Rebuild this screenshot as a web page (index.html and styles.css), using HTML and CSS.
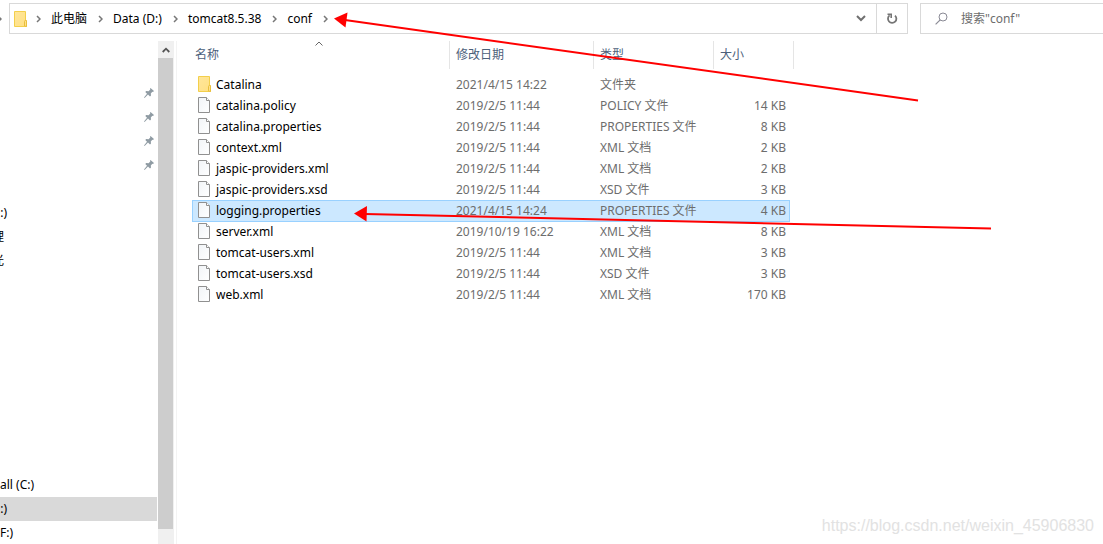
FILE: index.html
```
<!DOCTYPE html>
<html lang="zh-CN">
<head>
<meta charset="utf-8">
<title>conf</title>
<link rel="stylesheet" href="styles.css">
</head>
<body>
<svg class="defs" aria-hidden="true">
  <defs>
    <linearGradient id="paper" x1="0" y1="0" x2="1" y2="1"><stop offset="0" stop-color="#f1f4f7"/><stop offset="1" stop-color="#fff"/></linearGradient>
    <linearGradient id="gold" x1="0" y1="0" x2="1" y2="1"><stop offset="0" stop-color="#ffe69a"/><stop offset="1" stop-color="#ffe083"/></linearGradient>
  </defs>
  <symbol id="folder" viewBox="0 0 13 16"><path d="M.5.5h11v9.500h1v5.500H.5z" fill="url(#gold)" stroke="#f3cf4b"/><path d="M10.500 15V10.500q0-1 1-1h1V15.500z" fill="#ffe08a" stroke="#e9bf3c"/></symbol>
  <symbol id="file" viewBox="0 0 12 16"><path d="M.5.5h8l3 3v12H.5z" fill="url(#paper)" stroke="#909090"/><path d="M8.500.5v3h3" fill="#fff" stroke="#909090"/></symbol>
  <symbol id="chev" viewBox="0 0 5 8"><path d="M1 1l3 3-3 3" fill="none" stroke="#777" stroke-width="1.500"/></symbol>
  <symbol id="pin" viewBox="0 0 10 10"><path d="M6.500 0L10 3 9 4 8.300 3.800 6.800 5.600 7 7.600 6 8.500 4 6.600 .6 10 0 9.500 3 5.700 1.300 4 2.200 3 4.600 3.200 6.300 1.600 6 .7z" fill="#8f9ba3"/></symbol>
</svg>

<header class="toolbar">
  <svg class="chev chev-edge"><use href="#chev"/></svg>
  <nav class="address" aria-label="路径">
    <svg class="folder"><use href="#folder"/></svg>
    <svg class="chev"><use href="#chev"/></svg>
    <a href="#pc">此电脑</a>
    <svg class="chev"><use href="#chev"/></svg>
    <a href="#data">Data (D:)</a>
    <svg class="chev"><use href="#chev"/></svg>
    <a href="#tomcat">tomcat8.5.38</a>
    <svg class="chev"><use href="#chev"/></svg>
    <a href="#conf">conf</a>
    <svg class="chev"><use href="#chev"/></svg>
    <button class="history" aria-label="历史记录"><svg width="10" height="7" viewBox="0 0 10 7"><path d="M1 1l4 4 4-4" fill="none" stroke="#707070" stroke-width="2"/></svg></button>
    <button class="refresh" aria-label="刷新"><svg width="12" height="12" viewBox="0 0 12 12"><path d="M9 2.600A4.200 4.200 0 1 1 3.600 2.400" fill="none" stroke="#757575" stroke-width="1.800"/><path d="M1.500 1.200H5.200V5" fill="none" stroke="#757575" stroke-width="1.600"/></svg></button>
  </nav>
  <label class="search">
    <svg width="13" height="13" viewBox="0 0 13 13"><circle cx="8" cy="5" r="4" fill="none" stroke="#8a8a95"/><path d="M5.200 7.800L.6 12.400" stroke="#8a8a95" stroke-width="1.200"/></svg>
    <input type="search" placeholder="搜索&quot;conf&quot;" aria-label="搜索">
  </label>
</header>

<main class="explorer">
  <aside class="sidebar">
    <ul class="group">
      <li class="pinned"><svg><use href="#pin"/></svg></li>
      <li class="pinned"><svg><use href="#pin"/></svg></li>
      <li class="pinned"><svg><use href="#pin"/></svg></li>
      <li class="pinned"><svg><use href="#pin"/></svg></li>
      <li></li>
      <li><span class="tail">:)</span></li>
      <li><span class="tail cut">理</span></li>
      <li><span class="tail cut">光</span></li>
    </ul>
    <ul class="group drives">
      <li><span>all (C:)</span></li>
      <li class="current"><span class="tail">:)</span></li>
      <li><span>F:)</span></li>
    </ul>
  </aside>
  <div class="scrollbar">
    <button aria-label="向上滚动"><svg width="8" height="6" viewBox="0 0 8 6"><path d="M.7 5L4 1.700 7.300 5" fill="none" stroke="#555" stroke-width="1.800"/></svg></button>
    <div class="thumb"></div>
  </div>
  <section class="content">
    <table class="files">
      <colgroup><col class="c-name"><col class="c-date"><col class="c-type"><col class="c-size"></colgroup>
      <thead>
        <tr>
          <th>名称<svg class="sort" width="8" height="5" viewBox="0 0 8 5"><path d="M.5 4.500L4 1l3.500 3.500" fill="none" stroke="#666"/></svg></th>
          <th>修改日期</th><th>类型</th><th>大小</th>
        </tr>
      </thead>
      <tbody>
        <tr><td><svg class="folder"><use href="#folder"/></svg>Catalina</td><td>2021/4/15 14:22</td><td>文件夹</td><td></td></tr>
        <tr><td><svg class="file"><use href="#file"/></svg>catalina.policy</td><td>2019/2/5 11:44</td><td>POLICY 文件</td><td>14 KB</td></tr>
        <tr><td><svg class="file"><use href="#file"/></svg>catalina.properties</td><td>2019/2/5 11:44</td><td>PROPERTIES 文件</td><td>8 KB</td></tr>
        <tr><td><svg class="file"><use href="#file"/></svg>context.xml</td><td>2019/2/5 11:44</td><td>XML 文档</td><td>2 KB</td></tr>
        <tr><td><svg class="file"><use href="#file"/></svg>jaspic-providers.xml</td><td>2019/2/5 11:44</td><td>XML 文档</td><td>2 KB</td></tr>
        <tr><td><svg class="file"><use href="#file"/></svg>jaspic-providers.xsd</td><td>2019/2/5 11:44</td><td>XSD 文件</td><td>3 KB</td></tr>
        <tr class="selected"><td><svg class="file"><use href="#file"/></svg>logging.properties</td><td>2021/4/15 14:24</td><td>PROPERTIES 文件</td><td>4 KB</td></tr>
        <tr><td><svg class="file"><use href="#file"/></svg>server.xml</td><td>2019/10/19 16:22</td><td>XML 文档</td><td>8 KB</td></tr>
        <tr><td><svg class="file"><use href="#file"/></svg>tomcat-users.xml</td><td>2019/2/5 11:44</td><td>XML 文档</td><td>3 KB</td></tr>
        <tr><td><svg class="file"><use href="#file"/></svg>tomcat-users.xsd</td><td>2019/2/5 11:44</td><td>XSD 文件</td><td>3 KB</td></tr>
        <tr><td><svg class="file"><use href="#file"/></svg>web.xml</td><td>2019/2/5 11:44</td><td>XML 文档</td><td>170 KB</td></tr>
      </tbody>
    </table>
  </section>
</main>

<svg class="arrows" width="1000" height="240" viewBox="0 0 1000 240" aria-hidden="true">
  <g stroke="#f00" stroke-width="2" fill="#f00">
    <path d="M345 20L918 100.500"/><path d="M334 18.500L347.500 12.500 345.500 27.500z" stroke="none"/>
    <path d="M365 214L991 228.500"/><path d="M354 213.500L367 206 366.500 221.500z" stroke="none"/>
  </g>
</svg>
<p class="watermark">https://blog.csdn.net/weixin_45906830</p>
</body>
</html>
```
FILE: styles.css
```
* { box-sizing: border-box; }

body {
  margin: 0;
  min-height: 100vh;
  display: flex;
  flex-direction: column;
  position: relative;
  overflow: hidden;
  background: #fff;
  color: #000;
  font: 12px/20px "Noto Sans", "Noto Sans CJK SC", sans-serif;
}

button { border: 0; padding: 0; background: none; display: grid; place-items: center; }
.defs { position: absolute; width: 0; height: 0; }

/* toolbar */
.toolbar { display: flex; align-items: center; padding-top: 3px; overflow: hidden; }
.chev { width: 5px; height: 8px; flex: none; }
.chev-edge { margin-left: -3px; margin-right: 7px; }
.address {
  flex: 1;
  display: flex;
  align-items: center;
  height: 31px;
  border: 1px solid #d9d9d9;
  padding-left: 4px;
}
.folder { width: 13px; height: 16px; }
.address .folder { margin-right: 9px; }
.address a { color: #000; text-decoration: none; margin: 0 11px 0 10px; }
.history { width: 30px; height: 100%; margin-left: auto; }
.refresh { width: 31px; height: 100%; border-left: 1px solid #d9d9d9; }
.search {
  flex: none;
  width: 183px;
  height: 31px;
  display: flex;
  align-items: center;
  gap: 13px;
  margin-left: 12px;
  padding-left: 14px;
  border: 1px solid #d9d9d9;
  border-right: 0;
}
.search svg { flex: none; }
.search input {
  flex: 1;
  min-width: 0;
  border: 0;
  padding: 0;
  background: none;
  font: inherit;
}
.search input::placeholder { color: #6d6d6d; opacity: 1; }

/* navigation pane */
.explorer { flex: 1; display: flex; padding-top: 7px; }
.sidebar {
  width: 158px;
  display: flex;
  flex-direction: column;
  justify-content: space-between;
  padding-top: 40px;
  padding-right: 1px;
}
.group { list-style: none; margin: 0; padding: 0; }
.group li { height: 24px; display: flex; align-items: center; overflow: hidden; }
.pinned { justify-content: flex-end; padding-right: 3px; }
.pinned svg { width: 10px; height: 10px; }
.tail { width: 7px; display: flex; justify-content: flex-end; }
.cut { width: 4px; }
.drives { margin-bottom: -1px; }
.current { background: #d9d9d9; }

.scrollbar {
  width: 16px;
  display: flex;
  flex-direction: column;
  padding-bottom: 15px;
  background: #f0f0f0;
}
.scrollbar button { height: 17px; }
.thumb { flex: 1; background: #cdcdcd; margin-right: 1px; }

/* file list */
.content { flex: 1; margin-left: 2px; padding-left: 15px; border-left: 1px solid #f3f3f3; }
.files { width: 598px; table-layout: fixed; border-collapse: separate; border-spacing: 0; }
.c-name { width: 258px; }
.c-date { width: 144px; }
.c-type { width: 120px; }
.files th {
  position: relative;
  height: 28px;
  padding: 0 0 0 6px;
  text-align: left;
  font-weight: 400;
  color: #4c607a;
}
.files th:first-child { padding-left: 3px; }
.files th::after {
  content: "";
  position: absolute;
  top: 0;
  bottom: 0;
  right: 0;
  border-right: 1px solid #e5e5e5;
}
.files th:last-child::after { right: -4px; }
.sort { position: absolute; top: 0; left: 50%; margin-left: -6px; }
.files tbody::before { content: ""; display: block; height: 5px; }
.files td { height: 21px; padding: 0 0 0 6px; color: #6d6d6d; white-space: nowrap; }
.files td:first-child { padding-left: 6px; color: #000; }
.files td:last-child { padding: 0 4px 0 0; text-align: right; }
.files td svg { vertical-align: -3px; margin-right: 6px; }
.files td .folder { margin-right: 5px; }
.file { width: 12px; height: 16px; }
.selected td {
  background: #cce8ff;
  box-shadow: inset 0 1px #99d1ff, 0 1px #99d1ff;
}
.selected td:first-child { box-shadow: inset 1px 1px #99d1ff, 0 1px #99d1ff; }
.selected td:last-child { box-shadow: inset -1px 1px #99d1ff, 0 1px #99d1ff; }

/* overlays */
.arrows { position: absolute; top: 0; left: 0; pointer-events: none; }
.watermark {
  position: absolute;
  right: 9px;
  bottom: 8px;
  margin: 0;
  font: 16px/20px "Liberation Sans", Arial, sans-serif;
  color: #e2e2e2;
}
```
